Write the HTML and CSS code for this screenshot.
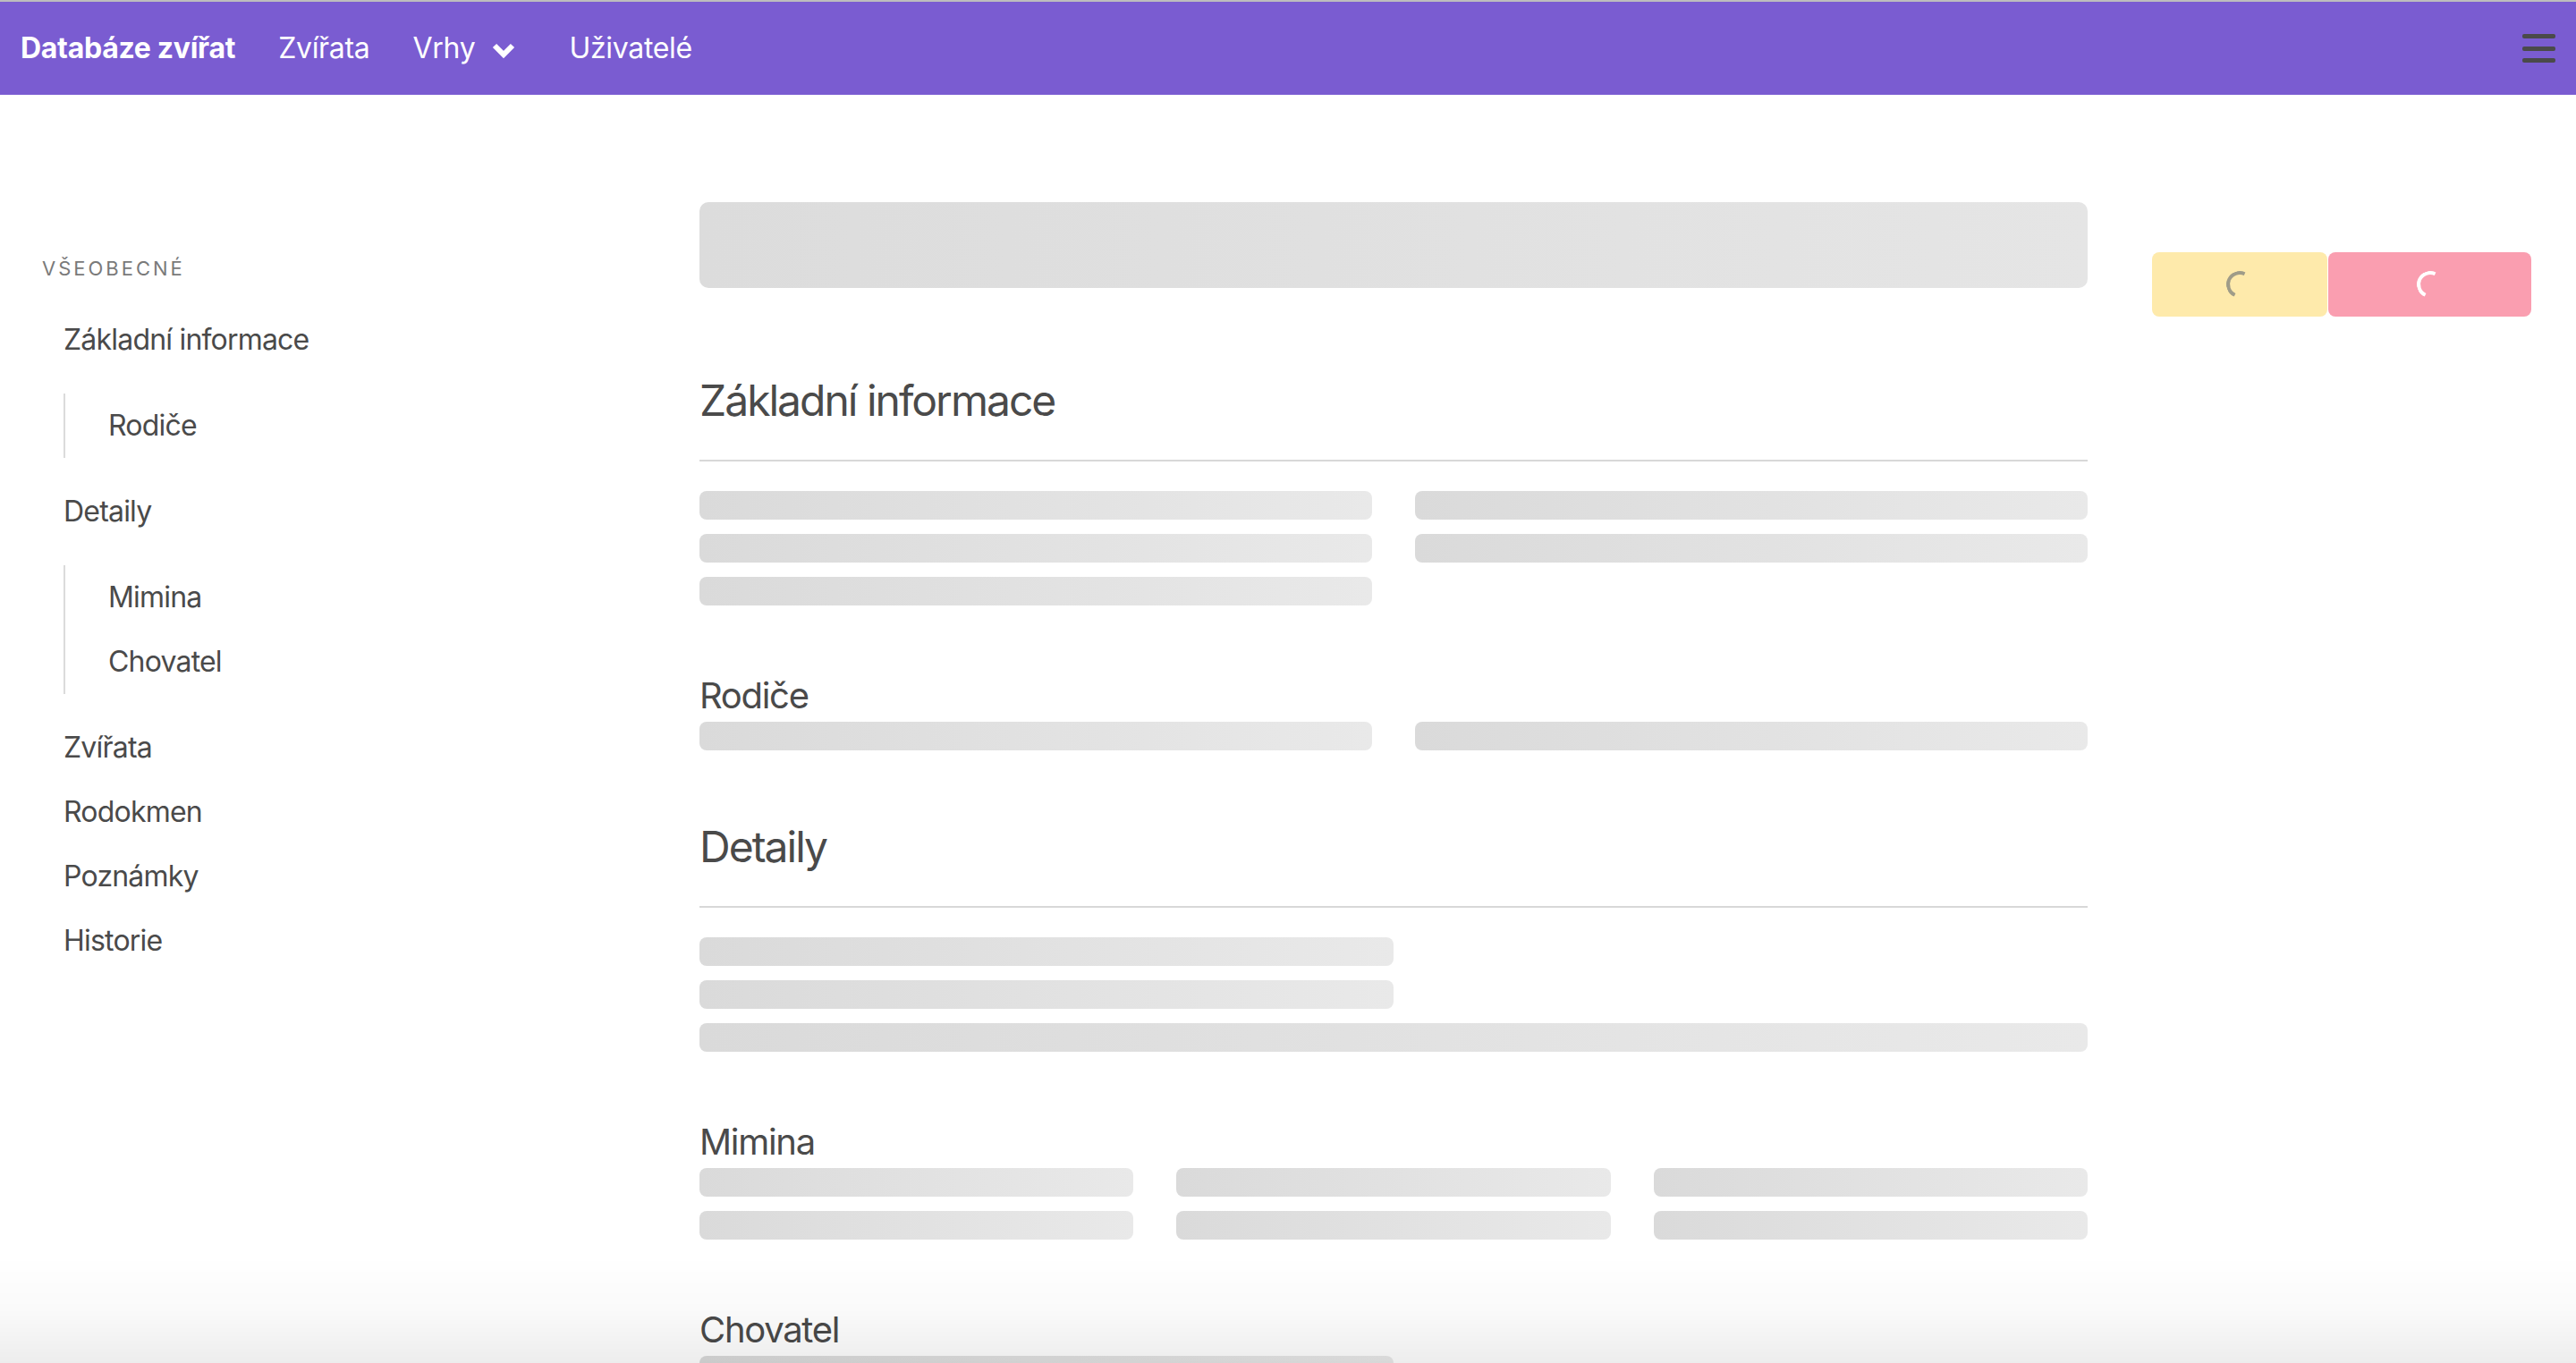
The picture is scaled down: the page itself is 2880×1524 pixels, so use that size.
FILE: index.html
```html
<!DOCTYPE html>
<html lang="cs">
<head>
<meta charset="utf-8">
<title>Databáze zvířat</title>
<link rel="stylesheet" href="styles.css">
</head>
<body>
<nav class="navbar">
  <a class="nav-item brand">Databáze zvířat</a>
  <a class="nav-item">Zvířata</a>
  <a class="nav-item dropdown">Vrhy
    <svg class="chev" width="28" height="28" viewBox="0 0 28 28"><path d="M4 9 L14 19 L24 9" fill="none" stroke="#fff" stroke-width="6" stroke-linejoin="miter"/></svg>
  </a>
  <a class="nav-item">Uživatelé</a>
  <div class="burger"><span></span><span></span><span></span></div>
</nav>

<div class="layout">
  <aside class="sidebar">
    <p class="menu-label">Všeobecné</p>
    <ul class="menu-list">
      <li><a>Základní informace</a>
        <ul><li><a>Rodiče</a></li></ul>
      </li>
      <li><a>Detaily</a>
        <ul><li><a>Mimina</a></li><li><a>Chovatel</a></li></ul>
      </li>
      <li><a>Zvířata</a></li>
      <li><a>Rodokmen</a></li>
      <li><a>Poznámky</a></li>
      <li><a>Historie</a></li>
    </ul>
  </aside>

  <main class="main">
    <div class="skel skel-hero"></div>

    <h2 class="title first">Základní informace</h2>
    <hr class="divider">
    <div class="grid2">
      <div class="skel line"></div><div class="skel line"></div>
      <div class="skel line"></div><div class="skel line"></div>
      <div class="skel line"></div>
    </div>

    <h3 class="subtitle">Rodiče</h3>
    <div class="grid2">
      <div class="skel line"></div><div class="skel line"></div>
    </div>

    <h2 class="title">Detaily</h2>
    <hr class="divider">
    <div class="stack">
      <div class="skel line half"></div>
      <div class="skel line half"></div>
      <div class="skel line"></div>
    </div>

    <h3 class="subtitle">Mimina</h3>
    <div class="grid3">
      <div class="skel line"></div><div class="skel line"></div><div class="skel line"></div>
      <div class="skel line"></div><div class="skel line"></div><div class="skel line"></div>
    </div>

    <h3 class="subtitle">Chovatel</h3>
    <div class="stack">
      <div class="skel line half"></div>
      <div class="skel line half"></div>
    </div>
  </main>

  <div class="actions">
    <button class="btn btn-warning"><span class="btn-text">Upravit</span><span class="spinner"></span></button>
    <button class="btn btn-danger"><span class="btn-text">Odstranit</span><span class="spinner"></span></button>
  </div>
</div>

<div class="bottom-fade"></div>
</body>
</html>
```

FILE: styles.css
```css
* { box-sizing: border-box; }
html, body { margin: 0; padding: 0; background: #fff; }
body {
  font-family: Inter, "Noto Sans", "Liberation Sans", sans-serif;
  color: #4a4a4a;
}
a { cursor: pointer; }

/* navbar */
.navbar {
  display: flex;
  align-items: center;
  height: 106px;
  border-top: 2px solid #bdbdbd;
  background: #7a5cd1;
}
.nav-item {
  display: flex;
  align-items: center;
  height: 100%;
  padding: 0 24px;
  color: #fff;
  font-size: 32px;
  line-height: 1;
  letter-spacing: -0.3px;
}
.nav-item.brand {
  font-weight: 700;
  padding-left: 23px;
  letter-spacing: -0.3px;
}
.nav-item.dropdown {
  padding-right: 35px;
}
.chev { margin-left: 18px; margin-top: 4px; }
.burger {
  margin-left: auto;
  margin-right: 23px;
  display: flex;
  flex-direction: column;
  gap: 8.5px;
}
.burger span {
  display: block;
  width: 37px;
  height: 5px;
  border-radius: 2px;
  background: #4a4a4a;
}

/* layout */
.layout {
  display: grid;
  grid-template-columns: 782px 1552px 1fr;
}

/* sidebar */
.sidebar { padding: 179px 0 0 47px; }
.menu-label {
  margin: 0 0 29px;
  font-size: 22px;
  line-height: 30px;
  letter-spacing: 3px;
  text-transform: uppercase;
  color: #7a7a7a;
}
.menu-list, .menu-list ul { list-style: none; margin: 0; padding: 0; }
.menu-list a {
  display: block;
  padding: 16px 24px;
  font-size: 32px;
  line-height: 40px;
  color: #4a4a4a;
  letter-spacing: -0.8px;
}
.menu-list ul {
  margin: 24px 0 24px 24px;
  padding-left: 24px;
  border-left: 2px solid #dbdbdb;
}

/* main */
.main { padding-top: 120px; padding-bottom: 200px; }
.skel {
  background: linear-gradient(90deg, #dadada 0%, #e9e9e9 100%);
  border-radius: 8px;
}
.skel-hero {
  height: 96px;
  border-radius: 10px;
  background: linear-gradient(90deg, #dcdcdc 0%, #e5e5e5 100%);
}
.title {
  margin: 81px 0 0;
  font-size: 48px;
  line-height: 54px;
  font-weight: 400;
  color: #4a4a4a;
  letter-spacing: -2px;
}
.title.first { margin-top: 99px; }
.divider {
  margin: 39px 0 33px;
  border: 0;
  height: 2px;
  background: #d8d8d8;
}
.subtitle {
  margin: 78px 0 7px;
  font-size: 40px;
  line-height: 45px;
  font-weight: 400;
  color: #4a4a4a;
  letter-spacing: -1.3px;
}
.line { height: 32px; }
.grid2 {
  display: grid;
  grid-template-columns: 1fr 1fr;
  gap: 16px 48px;
}
.grid3 {
  display: grid;
  grid-template-columns: 1fr 1fr 1fr;
  gap: 16px 48px;
}
.stack { display: flex; flex-direction: column; gap: 16px; }
.line.half { width: 776px; }

/* actions */
.actions {
  padding: 176px 0 0 72px;
  display: flex;
  align-items: flex-start;
  gap: 1px;
}
.btn {
  position: relative;
  height: 72px;
  border: 0;
  border-radius: 8px;
  font-family: inherit;
  font-size: 32px;
  padding: 0;
}
.btn-text { color: transparent; }
.btn-warning { width: 196px; background: #feeaab; }
.btn-danger { width: 227px; background: #fa9eb0; }
.spinner {
  position: absolute;
  left: 50%;
  top: 50%;
  width: 30px;
  height: 30px;
  margin: -15px 0 0 -15px;
  border-radius: 50%;
  border: 4px solid transparent;
  transform: rotate(-20deg);
}
.btn-warning .spinner { border-left-color: #9f9c88; border-top-color: #9f9c88; }
.btn-danger .spinner { border-left-color: #fff; border-top-color: #fff; }

/* bottom window fade */
.bottom-fade {
  position: fixed;
  left: 0;
  right: 0;
  bottom: 0;
  height: 120px;
  pointer-events: none;
  background: linear-gradient(180deg, rgba(0,0,0,0) 0%, rgba(0,0,0,0.02) 50%, rgba(0,0,0,0.07) 100%);
}
```
